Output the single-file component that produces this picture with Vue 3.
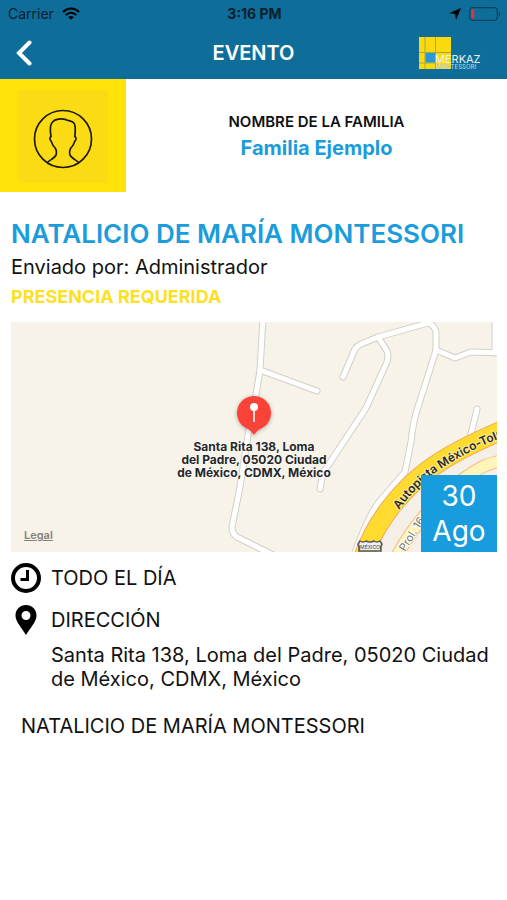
<template>
  <div class="screen">
    <header class="header">
      <div class="status-bar">
        <div class="carrier">
          <span>Carrier</span>
          <svg class="wifi" viewBox="0 0 18 13" aria-hidden="true">
            <path d="M1 5 C5.500 .3 12.500 .3 17 5" />
            <path d="M3.800 8 C6.800 5 11.200 5 14.200 8" />
            <path class="wifi-dot" d="M6.200 10 C7.800 8.500 10.200 8.500 11.800 10 L9 12.800 Z" />
          </svg>
        </div>
        <span class="time">3:16 PM</span>
        <div class="indicators">
          <svg class="location" viewBox="0 0 12 12" aria-hidden="true">
            <path d="M12 0 L7 12 L6.200 6 L0 5.200 Z" />
          </svg>
          <svg class="battery" viewBox="0 0 32 14" aria-hidden="true">
            <rect x=".7" y=".7" width="27.600" height="12.600" rx="3" />
            <rect class="battery-level" x="2.300" y="2.300" width="3" height="9.400" rx="1" />
            <path class="battery-tip" d="M29.800 4.500 C31.600 5.200 31.600 8.800 29.800 9.500 Z" />
          </svg>
        </div>
      </div>
      <div class="nav-bar">
        <button class="back" type="button" aria-label="Volver" @click="goBack">
          <svg viewBox="0 0 16 26" aria-hidden="true">
            <path d="M13.500 2.500 L3 13 L13.500 23.500" />
          </svg>
        </button>
        <h1 class="nav-title">EVENTO</h1>
        <svg class="logo" viewBox="0 0 62 33" role="img" aria-label="Merkaz Montessori">
          <rect class="logo-base" width="32" height="32" />
          <path class="logo-lines" d="M6 0 V32 M16.500 0 V32 M0 15.500 H32 M0 26 H17" />
          <rect class="logo-square" x="6.500" y="16" width="9.500" height="9.500" />
          <text class="logo-name" x="16" y="26">MERKAZ</text>
          <text class="logo-sub" x="17" y="32">MONTESSORI</text>
        </svg>
      </div>
    </header>

    <section class="family">
      <div class="avatar">
        <div class="avatar-inner">
          <svg viewBox="0 0 60 60" aria-hidden="true">
            <circle cx="30" cy="30" r="28.500" />
            <path d="M14.300 53.500 C17 50.500 22 49.500 23.200 45.500 C24 42 23 39.500 20.500 37 C19 35.500 19.200 33.500 18 32 C16.500 30.500 16.600 28.500 18 27.500 C17.300 23 16 17 19.500 13 C22 10 28 9.300 33 10.600 C35 12.200 39 11.200 41.300 14.500 C43 18 42.300 23 41.800 27.500 C43.400 28.500 43.500 30.500 42 32 C40.800 33.500 41 35.500 39.500 37 C37 39.500 36 42 36.800 45.500 C38 49.500 43 50.500 45.700 53.500" />
          </svg>
        </div>
      </div>
      <div class="family-info">
        <span class="family-label">NOMBRE DE LA FAMILIA</span>
        <span class="family-name">{{ event.family }}</span>
      </div>
    </section>

    <main class="content">
      <h2 class="title">{{ event.title }}</h2>
      <p class="sender">Enviado por: {{ event.sender }}</p>
      <p class="required">PRESENCIA REQUERIDA</p>

      <div class="map">
        <svg class="map-canvas" viewBox="0 0 486 230" preserveAspectRatio="xMidYMid slice" aria-hidden="true">
          <path class="zone" d="M352 236 C366 195 395 165 416 149 S460 122 492 108 V236 Z" />
          <!-- local streets: grey casing first, white fill on top -->
          <g class="street-casing">
            <path v-for="d in streets" :key="d" :d="d" />
          </g>
          <g class="street-fill">
            <path v-for="d in streets" :key="d" :d="d" />
          </g>
          <path class="avenue-casing" :d="avenue" />
          <path class="avenue" :d="avenue" />
          <path class="highway-casing" :d="highway" />
          <path class="highway" :d="highway" />
          <path id="highway-label" class="guide" d="M388 188 C400 172 414 157 430 147 C448 135 468 124 500 112" />
          <path id="avenue-label" class="guide" d="M394 230 L424 182" />
          <text class="highway-text"><textPath href="#highway-label">Autopista México-Tolu</textPath></text>
          <text class="avenue-text"><textPath href="#avenue-label">Prol. 16</textPath></text>
          <path class="shield" d="M349 219 Q352 221 355 219 Q359 221 363 219 Q366 221 369 219 L371 222 Q369 225 370 229 H348 Q349 225 347 222 Z" />
          <text class="shield-text" x="359" y="227">MÉXICO</text>
        </svg>
        <div class="marker">
          <svg class="pin" viewBox="0 0 36 41" aria-hidden="true">
            <path class="pin-body" d="M18 1 A17 17 0 0 1 26 33 Q21 35 18 40 Q15 35 10 33 A17 17 0 0 1 18 1 Z" />
            <path class="pin-needle" d="M18 15 V27" />
            <circle class="pin-head" cx="18" cy="12" r="4" />
          </svg>
          <span class="marker-label">{{ event.pinLabel }}</span>
        </div>
        <a class="legal" href="#legal">Legal</a>
        <time class="date" datetime="08-30">
          <span>30</span>
          <span>Ago</span>
        </time>
      </div>

      <div class="details">
        <div class="row">
          <svg class="row-icon" viewBox="0 0 30 30" aria-hidden="true">
            <circle class="clock-ring" cx="15" cy="15" r="13" />
            <path class="clock-hands" d="M16.500 7 V16.500 H9.500" />
          </svg>
          <span>TODO EL DÍA</span>
        </div>
        <div class="row">
          <svg class="row-icon" viewBox="0 0 30 30" aria-hidden="true">
            <path fill-rule="evenodd" d="M15 0 C21 0 25.500 4.500 25.500 10.500 C25.500 17 19 23 15 30 C11 23 4.500 17 4.500 10.500 C4.500 4.500 9 0 15 0 Z M15 6 A4.500 4.500 0 1 0 15 15 A4.500 4.500 0 1 0 15 6 Z" />
          </svg>
          <span>DIRECCIÓN</span>
        </div>
      </div>
      <p class="address">{{ event.address }}</p>
      <p class="description">{{ event.title }}</p>
    </main>
  </div>
</template>

<script setup>
const event = {
  family: 'Familia Ejemplo',
  title: 'NATALICIO DE MARÍA MONTESSORI',
  sender: 'Administrador',
  address: 'Santa Rita 138, Loma del Padre, 05020 Ciudad de México, CDMX, México',
  pinLabel: 'Santa Rita 138, Loma\ndel Padre, 05020 Ciudad\nde México, CDMX, México',
};

// Map geometry, in map units (486 x 230)
const streets = [
  'M252 -4 L249 48 L245 73 L237 113 L229 165 L221 205 Q221 212 226 215 L262 233',
  'M249 48 L306 69',
  'M332 55 L344 27 Q346 24 350 22 L367 15 L417 1 Q425 4 425 12 L425 28 L408 82 Q402 98 400 120 L394 150 L368 180 Q356 196 342 236',
  'M367 15 L376 29 Q378 34 376 40 L355 86 L312 151 L309 167',
  'M425 28 L444 36 L460 30 L490 31',
  'M484 -4 V31',
  'M466 87 L459 116',
];
const highway = 'M352 236 C366 195 395 165 416 149 S460 122 492 108';
const avenue = 'M384 238 C400 205 430 172 455 155 S480 143 492 138';

const goBack = () => {
  window.history.back();
};
</script>

<style>
body {
  margin: 0;
  background: #fff;
}
</style>

<style scoped>
.screen {
  font-family: Inter, 'Liberation Sans', sans-serif;
  color: #111;
  min-height: 100vh;
  background: #fff;
}

h1,
h2,
p {
  margin: 0;
}

.header {
  background: #0f6d99;
}

.status-bar {
  display: grid;
  grid-template-columns: 1fr auto 1fr;
  align-items: center;
  height: 27px;
  padding: 0 6px 0 8px;
  font-size: 14px;
  color: #06202e;
}

.carrier,
.indicators {
  display: flex;
  align-items: center;
  gap: 8px;
}

.indicators {
  justify-content: flex-end;
}

.time {
  font-weight: 700;
}

.wifi {
  width: 18px;
  height: 13px;
  fill: none;
  stroke: #000;
  stroke-width: 2.2;
}

.wifi-dot {
  fill: #000;
  stroke: none;
}

.location {
  width: 12px;
  height: 12px;
}

.battery {
  width: 32px;
  height: 14px;
  fill: none;
  stroke: #0a4460;
  stroke-width: 1.2;
}

.battery-level {
  fill: #e0323c;
  stroke: none;
}

.battery-tip {
  fill: #0a4460;
  stroke: none;
}

.nav-bar {
  display: grid;
  grid-template-columns: 1fr auto 1fr;
  align-items: center;
  height: 52px;
  padding: 0 16px;
}

.back {
  justify-self: start;
  display: flex;
  padding: 0;
  border: 0;
  background: none;
  cursor: pointer;
}

.back svg {
  width: 16px;
  height: 26px;
  fill: none;
  stroke: #fff;
  stroke-width: 4;
  stroke-linecap: round;
}

.nav-title {
  font-size: 20px;
  font-weight: 600;
  color: #fff;
}

.logo {
  justify-self: end;
  width: 62px;
  height: 33px;
  margin-right: 10px;
}

.logo-base {
  fill: #fbd90f;
}

.logo-lines {
  fill: none;
  stroke: #a9a545;
  stroke-width: 1;
}

.logo-square {
  fill: #2b97d3;
}

.logo-name,
.logo-sub {
  fill: #e4f1f6;
  font-size: 11px;
}

.logo-sub {
  font-size: 6px;
  font-weight: 500;
  fill: #b4d2de;
}

.family {
  display: flex;
}

.avatar {
  box-sizing: border-box;
  width: 126px;
  height: 113px;
  padding: 11px 18px 9px;
  background: #ffe20a;
}

.avatar-inner {
  display: flex;
  align-items: center;
  justify-content: center;
  height: 100%;
  padding-top: 4px;
  box-sizing: border-box;
  background: #fbdb13;
}

.avatar svg {
  width: 60px;
  height: 60px;
  fill: none;
  stroke: #1c1a05;
  stroke-width: 1.7;
}

.family-info {
  flex: 1;
  display: flex;
  flex-direction: column;
  align-items: center;
  justify-content: center;
  gap: 4px;
  padding-top: 2px;
}

.family-label {
  font-size: 15px;
  line-height: 18px;
  font-weight: 600;
}

.family-name {
  font-size: 20px;
  line-height: 26px;
  font-weight: 700;
  color: #1b9cdb;
}

.content {
  padding: 26px 10px 0 11px;
}

.title {
  font-size: 26px;
  line-height: 32px;
  font-weight: 600;
  color: #1b9cdb;
}

.sender {
  margin-top: 4px;
  font-size: 20px;
  line-height: 26px;
}

.required {
  margin-top: 4px;
  font-size: 18px;
  line-height: 26px;
  font-weight: 700;
  color: #fde01f;
}

.map {
  position: relative;
  display: flex;
  margin-top: 12px;
  aspect-ratio: 486 / 230;
  overflow: hidden;
  background: #f7f3e9;
}

.map-canvas {
  width: 100%;
  height: 100%;
}

.zone {
  fill: #f5efe7;
}

.street-casing,
.street-fill,
.avenue,
.avenue-casing,
.highway,
.highway-casing,
.guide {
  fill: none;
  stroke-linecap: round;
  stroke-linejoin: round;
}

.street-casing {
  stroke: #d3d0c9;
  stroke-width: 7;
}

.street-fill {
  stroke: #fff;
  stroke-width: 5;
}

.avenue-casing {
  stroke: #f5b98c;
  stroke-width: 13;
}

.avenue {
  stroke: #fdf6b8;
  stroke-width: 11;
}

.highway-casing {
  stroke: #f0a860;
  stroke-width: 20;
}

.highway {
  stroke: #fedb2e;
  stroke-width: 18;
}

.highway-text {
  font-size: 12px;
  font-weight: 600;
  fill: #2b2a26;
  stroke: #fdeb9a;
  stroke-width: 2;
  paint-order: stroke;
}

.avenue-text {
  font-size: 11px;
  fill: #77746e;
  stroke: #fff;
  stroke-width: 2;
  paint-order: stroke;
}

.shield {
  fill: #eee;
  stroke: #555;
  stroke-width: 1.5;
}

.shield-text {
  font-size: 5px;
  text-anchor: middle;
  fill: #444;
}

.marker {
  position: absolute;
  top: 73px;
  left: 50%;
  display: flex;
  flex-direction: column;
  align-items: center;
  width: 180px;
  margin-left: -90px;
}

.pin {
  width: 36px;
  height: 41px;
  filter: drop-shadow(0 1px 2px rgba(0, 0, 0, 0.3));
}

.pin-body {
  fill: #fb4238;
}

.pin-head {
  fill: #fff;
}

.pin-needle {
  stroke: #ffd5d0;
  stroke-width: 2;
}

.marker-label {
  margin-top: 4px;
  font-size: 12px;
  line-height: 13px;
  font-weight: 700;
  white-space: pre-line;
  text-align: center;
  color: #25272a;
  text-shadow: 0 0 2px #fff, 0 0 2px #fff;
}

.legal {
  position: absolute;
  left: 13px;
  bottom: 10px;
  font-size: 11px;
  line-height: 14px;
  font-weight: 600;
  color: #85827b;
}

.date {
  position: absolute;
  right: 0;
  bottom: 0;
  display: flex;
  flex-direction: column;
  align-items: center;
  justify-content: center;
  width: 76px;
  height: 77px;
  background: #179cde;
  color: #fff;
  font-size: 28px;
  line-height: 35px;
}

.details {
  display: flex;
  flex-direction: column;
  gap: 12px;
  margin-top: 11px;
}

.row {
  display: flex;
  align-items: center;
  gap: 10px;
  font-size: 20px;
  line-height: 30px;
}

.row-icon {
  width: 30px;
  height: 30px;
}

.clock-ring {
  fill: none;
  stroke: #000;
  stroke-width: 4;
}

.clock-hands {
  fill: none;
  stroke: #000;
  stroke-width: 3;
}

.address {
  margin: 8px 0 0 40px;
  font-size: 20px;
  line-height: 24px;
}

.description {
  margin: 23px 0 0 10px;
  font-size: 20px;
  line-height: 24px;
}
</style>
